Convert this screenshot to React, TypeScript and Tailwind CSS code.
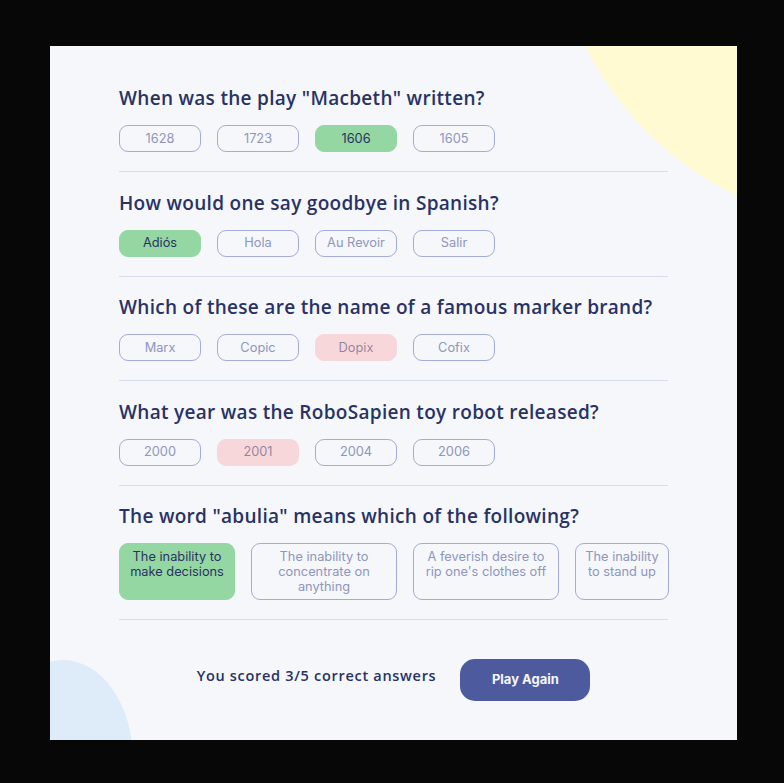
type Answer = {
  label: string
  state?: 'correct' | 'wrong'
  size?: string
}

type Question = {
  title: string
  answers: Answer[]
  tall?: boolean
}

const questions: Question[] = [
  {
    title: 'When was the play "Macbeth" written?',
    answers: [{ label: '1628' }, { label: '1723' }, { label: '1606', state: 'correct' }, { label: '1605' }],
  },
  {
    title: 'How would one say goodbye in Spanish?',
    answers: [{ label: 'Adiós', state: 'correct' }, { label: 'Hola' }, { label: 'Au Revoir' }, { label: 'Salir' }],
  },
  {
    title: 'Which of these are the name of a famous marker brand?',
    answers: [{ label: 'Marx' }, { label: 'Copic' }, { label: 'Dopix', state: 'wrong' }, { label: 'Cofix' }],
  },
  {
    title: 'What year was the RoboSapien toy robot released?',
    answers: [{ label: '2000' }, { label: '2001', state: 'wrong' }, { label: '2004' }, { label: '2006' }],
  },
  {
    title: 'The word "abulia" means which of the following?',
    tall: true,
    answers: [
      { label: 'The inability to make decisions', state: 'correct', size: 'w-[116px] px-[10px]' },
      { label: 'The inability to concentrate on anything', size: 'w-[146px] px-[26px]' },
      { label: "A feverish desire to rip one's clothes off", size: 'w-[146px] px-[10px]' },
      { label: 'The inability to stand up', size: 'w-[94px] px-[8px]' },
    ],
  },
]

function AnswerPill({ answer, tall }: { answer: Answer; tall?: boolean }) {
  const tone =
    answer.state === 'correct'
      ? 'bg-[#94d7a2] border-[#94d7a2] text-[#293264]'
      : answer.state === 'wrong'
        ? 'bg-[#f8d7da] border-[#f8d7da] text-[#293264]/50'
        : 'bg-transparent border-[#a3acd8] text-[#8f96ba]'

  if (tall) {
    return (
      <div
        className={`h-[57px] flex-shrink-0 rounded-[9px] border py-[5px] text-center text-[12.8px] leading-[15px] ${tone} ${answer.size}`}
      >
        {answer.label}
      </div>
    )
  }

  return (
    <div
      className={`flex h-[27px] w-[82px] items-center justify-center rounded-[9px] border text-[12.8px] ${tone}`}
    >
      {answer.label}
    </div>
  )
}

export default function App() {
  return (
    <div
      className="min-h-[783px] bg-[#070707] pl-[50px] pt-[46px]"
      style={{ fontFamily: 'Inter, "Noto Sans", sans-serif' }}
    >
      <div className="relative h-[694px] w-[687px] overflow-hidden bg-[#f5f7fb]">
        <div className="absolute left-[499px] top-[-483px] h-[666px] w-[666px] rounded-full bg-[#fffad1]" />
        <div className="absolute left-[-57px] top-[614px] h-[200px] w-[140px] rounded-[50%] bg-[#deebf8]" />

        <div className="relative px-[69px] pt-[40px]">
          {questions.map((q) => (
            <div key={q.title} className="mb-[18.5px] border-b border-[#d8dcef] pb-[19px]">
              <h2
                className="mb-[15px] text-[19px] font-semibold leading-[24px] tracking-[0.3px] text-[#293264]"
                style={{ fontFamily: '"Open Sans", sans-serif' }}
              >
                {q.title}
              </h2>
              <div className="flex gap-4">
                {q.answers.map((a) => (
                  <AnswerPill key={a.label} answer={a} tall={q.tall} />
                ))}
              </div>
            </div>
          ))}

          <div className="flex items-center justify-center gap-6 pt-[20px]">
            <span
              className="mb-2 text-[14.5px] font-semibold tracking-[0.7px] text-[#293264]"
              style={{ fontFamily: '"Open Sans", sans-serif' }}
            >
              You scored 3/5 correct answers
            </span>
            <button className="h-[42px] w-[130px] rounded-[15px] bg-[#4d5b9e] text-[13px] font-bold text-[#f5f7fb]">
              Play Again
            </button>
          </div>
        </div>
      </div>
    </div>
  )
}
